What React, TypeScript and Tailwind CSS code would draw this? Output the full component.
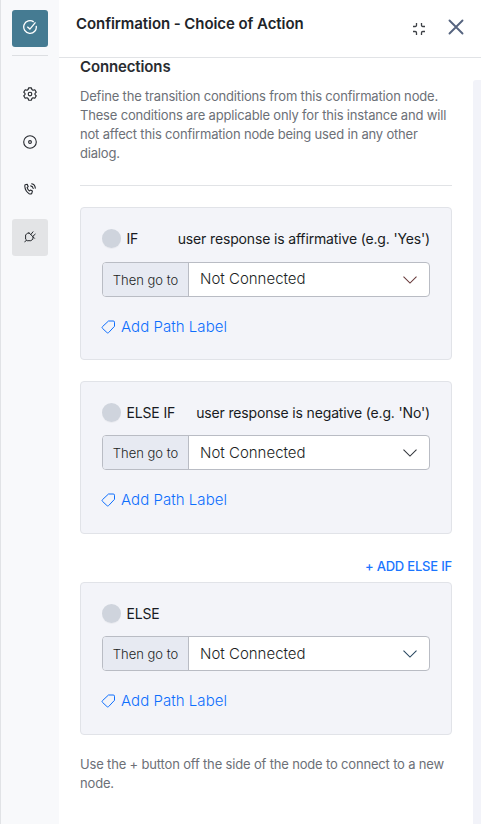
import type { ReactNode } from "react";

type IconProps = { className?: string };

function CheckCircleIcon({ className }: IconProps) {
  return (
    <svg className={className} viewBox="0 0 14 14" fill="none" stroke="currentColor" strokeWidth="1.3">
      <path d="M13.200 5.800A6.300 6.300 0 1 1 10.700 1.900" />
      <path d="M4.300 6.700l2.600 2.400 5.600-6.700" />
    </svg>
  );
}

function GearIcon({ className }: IconProps) {
  return (
    <svg className={className} viewBox="0 0 14 14" fill="none" stroke="currentColor" strokeWidth="1.15" strokeLinejoin="round">
      <path d="M5.600.8h2.800l.5 1.700 1.100.7 1.800-.4 1.500 2.400L12 6.400v1.200l1.300 1.200-1.500 2.400-1.800-.4-1.100.7-.5 1.700H5.600l-.5-1.700-1.100-.7-1.800.4L.7 8.800 2 7.600V6.400L.7 5.200l1.500-2.400 1.800.4 1.100-.7z" />
      <circle cx="7" cy="7" r="1.800" />
    </svg>
  );
}

function TargetIcon({ className }: IconProps) {
  return (
    <svg className={className} viewBox="0 0 14 14" fill="none" stroke="currentColor" strokeWidth="1.1">
      <circle cx="7" cy="7" r="6.300" />
      <circle cx="7" cy="7" r="1.400" />
    </svg>
  );
}

function PhoneIcon({ className }: IconProps) {
  return (
    <svg className={className} viewBox="0 0 12 12" fill="none" stroke="currentColor" strokeWidth="1.1" strokeLinejoin="round" strokeLinecap="round">
      <path d="M1.200 1.700l2-.4 1 2.400-1.100 1c.5 1.600 1.200 2.500 2.400 3.200l1-.8 1.900 1-.6 2.200c-.6.8-1.700.8-2.600.4C2.800 9.200 1 6.500.8 3.300c0-.7 0-1.200.4-1.600z" />
      <path d="M6.700 2.900c1.500.2 2.300 1 2.500 2.600M7.700.8c2.200.5 3.400 1.900 3.600 4.300" />
    </svg>
  );
}

function PlugIcon({ className }: IconProps) {
  return (
    <svg className={className} viewBox="0 0 12 12" fill="none" stroke="currentColor" strokeWidth="1" strokeLinecap="round" strokeLinejoin="round">
      <path d="M4.800 1.600l5.700 5.700M5.400 2.200H3.400L1.600 4v4.200l1.600 1.500h3.600l2-1.400.3-2.200M2.300 9.300L.7 11M6.800 3.600L9 .8M8.700 5.500l2.500-2.300" />
    </svg>
  );
}

function CollapseIcon({ className }: IconProps) {
  return (
    <svg className={className} viewBox="0 0 14 14" fill="none" stroke="currentColor" strokeWidth="1.3">
      <path d="M4.500 1v2.200c0 .8-.4 1.300-1.300 1.300H1M9.500 1v2.200c0 .8.4 1.300 1.300 1.300H13M4.500 13v-2.200c0-.8-.4-1.300-1.300-1.300H1M9.500 13v-2.200c0-.8.4-1.300 1.300-1.300H13" />
    </svg>
  );
}

function CloseIcon({ className }: IconProps) {
  return (
    <svg className={className} viewBox="0 0 16 16" fill="none" stroke="currentColor" strokeWidth="1.9" strokeLinecap="round">
      <path d="M1.500 1.500l13 13M14.500 1.500l-13 13" />
    </svg>
  );
}

function TagIcon({ className }: IconProps) {
  return (
    <svg className={className} viewBox="0 0 14 14" fill="none" stroke="currentColor" strokeWidth="1" strokeLinejoin="round">
      <path d="M7.500 1h4.700c.9 0 1.300.4 1.300 1.200v4.100L7.700 12.500c-.6.6-1.200.6-1.800 0L1.500 8.400c-.6-.6-.6-1.200 0-1.800z" />
    </svg>
  );
}

function ChevronIcon({ className }: IconProps) {
  return (
    <svg className={className} viewBox="0 0 14 8" fill="none" stroke="currentColor" strokeWidth="1.1">
      <path d="M.5.700L7 7.100 13.500.700" />
    </svg>
  );
}

function RailButton({ active, children }: { active?: boolean; children: ReactNode }) {
  return (
    <button
      className={
        active
          ? "flex h-[37px] w-9 items-center justify-center rounded-[3px] bg-[#e3e4e6] pb-0.5"
          : "flex h-[37px] w-9 items-center justify-center rounded-[3px]"
      }
    >
      {children}
    </button>
  );
}

type ConditionProps = { keyword: string; condition?: string; chevron: string; selectGap: string; valueInset: string };

function ConditionCard({ keyword, condition, chevron, selectGap, valueInset }: ConditionProps) {
  return (
    <section className="h-[153px] rounded-[4px] border border-[#e1e3e8] bg-[#f3f4f9] px-[21px] pt-[21px]">
      <div className="flex h-[20px] items-start text-[14px] leading-5 tracking-[-0.155px] text-[#181b22]">
        <span className="size-[19px] rounded-full bg-[#cfd4dd] shadow-[0_1px_1px_rgba(0,0,0,0.04)]" />
        <span className="ml-[5.5px]">{keyword}</span>
        {condition && <span className="ml-auto whitespace-nowrap">{condition}</span>}
      </div>
      <div className={`${selectGap} flex h-[35px] overflow-hidden rounded-[4px] border border-[#b9bcc4] bg-white`}>
        <span className="flex w-[86px] shrink-0 items-center justify-center border-r border-[#b9bcc4] bg-[#e7eaf2] pt-0.5 text-[13px] font-light text-[#1c1f25]">
          Then go to
        </span>
        <span className="flex flex-1 items-center justify-between pr-3 pl-[11px] text-[15px] font-light text-[#1c1f25]">
          <span className={valueInset}>Not Connected</span>
          <ChevronIcon className={`h-2 w-3.5 ${chevron}`} />
        </span>
      </div>
      <button className="mt-[19px] flex h-[22px] items-center text-[15px] font-light tracking-[0.04px] text-[#0d6efd]">
        <TagIcon className="-ml-px size-3.5" />
        <span className="ml-1.5">Add Path Label</span>
      </button>
    </section>
  );
}

export default function App() {
  return (
    <div className="flex h-[824px] w-[481px] overflow-hidden bg-white font-[Inter,sans-serif]">
      <nav className="flex w-[59px] shrink-0 flex-col items-center border-l border-[#e1e3e6] bg-[#f8f9fb] pt-2.5 text-[#25282d]">
        <button className="flex h-[37px] w-9 items-center justify-center rounded-[3px] bg-[#457b92] pb-[3px] text-white">
          <CheckCircleIcon className="size-3.5" />
        </button>
        <div className="mt-2 mb-[19px] h-px w-9 bg-[#dddfe2]" />
        <div className="flex flex-col gap-[11px]">
          <RailButton><GearIcon className="size-3.5" /></RailButton>
          <RailButton><TargetIcon className="size-3.5" /></RailButton>
          <RailButton><PhoneIcon className="mb-px size-3" /></RailButton>
          <RailButton active><PlugIcon className="size-3" /></RailButton>
        </div>
      </nav>
      <div className="flex min-w-0 flex-1 flex-col">
        <header className="flex h-[58px] shrink-0 items-start border-b border-[#e1e3e6] pr-[17px] pl-[17px]">
          <h1 className="pt-[13px] text-[15px] leading-[22px] font-semibold tracking-[-0.075px] text-[#212429]">Confirmation - Choice of Action</h1>
          <CollapseIcon className="mt-[22px] ml-auto size-3.5 text-[#3e4146]" />
          <CloseIcon className="mt-[19px] ml-[22px] size-4 text-[#56647f]" />
        </header>
        <div className="flex min-h-0 flex-1">
          <main className="w-[393px] pl-[21px]">
            <h2 className="-mt-px text-[15px] leading-[19px] font-semibold tracking-[-0.13px] text-[#292c31]">Connections</h2>
            <p className="mt-[11px] text-[13px] leading-[19px] tracking-[-0.18px] whitespace-nowrap text-[#6c7077]">
              Define the transition conditions from this confirmation node.<br />
              These conditions are applicable only for this instance and will<br />
              not affect this confirmation node being used in any other<br />
              dialog.
            </p>
            <hr className="mt-[22px] mb-[21px] border-[#e1e3e6]" />
            <ConditionCard keyword="IF" condition="user response is affirmative (e.g. 'Yes')" chevron="text-[#693b3c]" selectGap="mt-[13px]" valueInset="pt-0" />
            <div className="h-[21px]" />
            <ConditionCard keyword="ELSE IF" condition="user response is negative (e.g. 'No')" chevron="text-[#34373d]" selectGap="mt-3" valueInset="pt-px" />
            <div className="flex h-12 items-end justify-end pb-1.5">
              <button className="text-[13px] leading-5 font-medium tracking-[-0.2px] text-[#1a75ff]">+ ADD ELSE IF</button>
            </div>
            <ConditionCard keyword="ELSE" chevron="text-[#28465f]" selectGap="mt-3" valueInset="pt-px" />
            <p className="mt-[20px] text-[13px] leading-[19px] tracking-[-0.17px] whitespace-nowrap text-[#6c7077]">
              Use the + button off the side of the node to connect to a new<br />
              node.
            </p>
          </main>
          <div className="mt-[22px] ml-auto w-2 rounded-tl-[3px] bg-[#f2f3f9]" />
        </div>
      </div>
    </div>
  );
}
